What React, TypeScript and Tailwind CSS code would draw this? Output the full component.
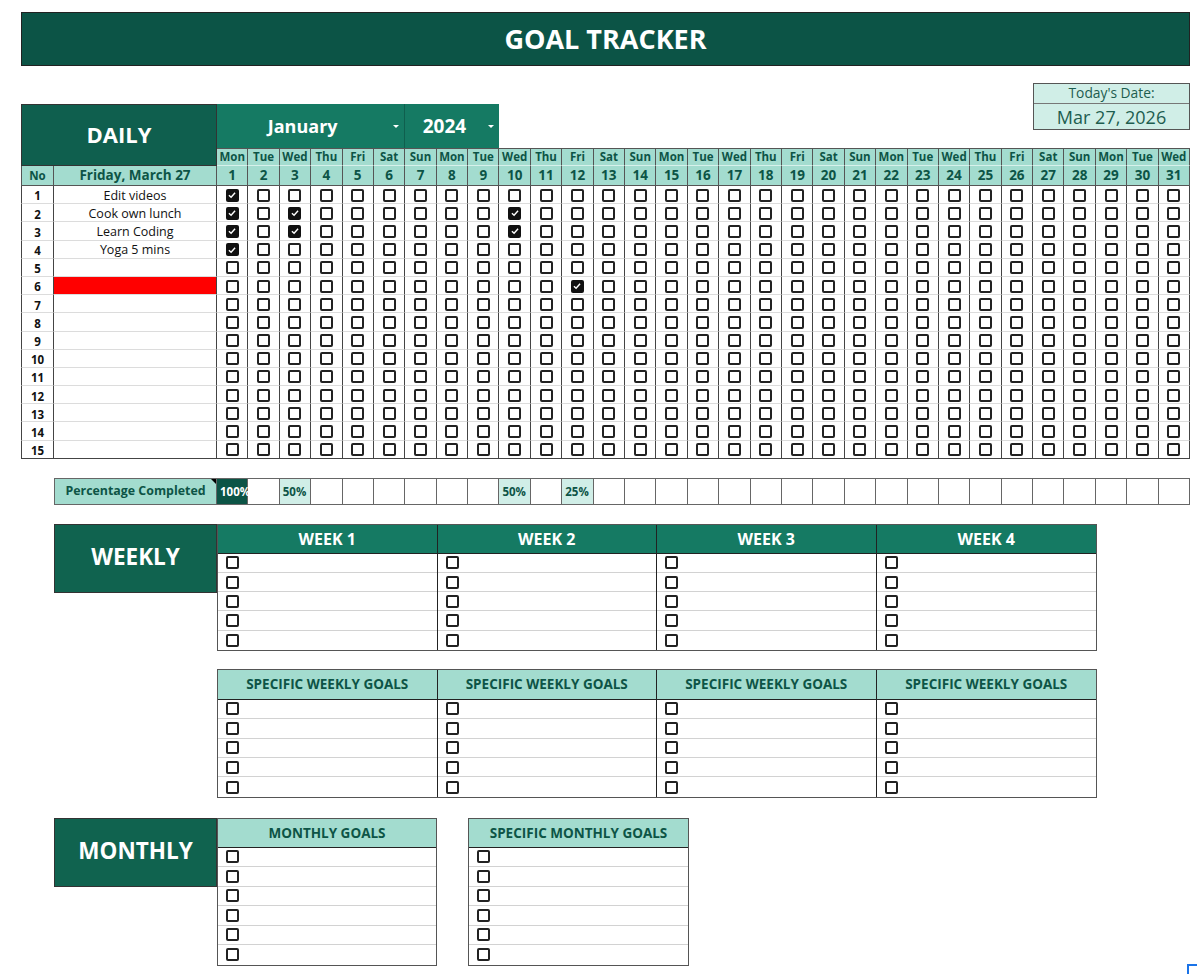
import React from "react";

const DAYS = ["Mon", "Tue", "Wed", "Thu", "Fri", "Sat", "Sun"];
const TASKS = ["Edit videos", "Cook own lunch", "Learn Coding", "Yoga 5 mins"];
// checked day numbers per task row (Jan 2024)
const CHECKED: number[][] = [[1], [1, 3, 10], [1, 3, 10], [1], [], [12]];
const days = Array.from({ length: 31 }, (_, i) => i + 1);
const rows = Array.from({ length: 15 }, (_, i) => i + 1);

function Box({ checked = false }: { checked?: boolean }) {
  if (checked) {
    return (
      <span className="flex h-[13px] w-[13px] items-center justify-center rounded-[2px] bg-[#111]">
        <svg viewBox="0 0 12 12" className="h-[10px] w-[10px]">
          <path d="M2.3 6.3 L4.9 8.7 L9.7 3.4" fill="none" stroke="white" strokeWidth="1.7" />
        </svg>
      </span>
    );
  }
  return <span className="block h-[13px] w-[13px] rounded-[2px] border-2 border-[#222]" />;
}

function Caret() {
  return <span className="h-0 w-0 border-x-[3px] border-t-[3px] border-x-transparent border-t-white" />;
}

function percentFor(day: number) {
  const done = CHECKED.filter((r) => r.includes(day)).length;
  return done === 0 ? null : Math.round((done / TASKS.length) * 100);
}

function DailyGrid() {
  return (
    <div className="mt-[17px] grid grid-cols-[33px_163px_repeat(31,minmax(0,1fr))] grid-rows-[21px_44px_18px_20px_repeat(15,18.2px)]">
      <div className="col-[1/29] row-[1/2]" />
      <div className="col-[29/34] row-[1/3] flex h-[47px] flex-col self-start border border-[#555] bg-[#d0eee7] text-[#1d5d4f]">
        <div className="flex h-[20px] items-center justify-center border-b border-[#777] text-[13.8px]">Today's Date:</div>
        <div className="flex flex-1 items-center justify-center text-[18px]">Mar 27, 2026</div>
      </div>
      <div className="col-[1/3] row-[2/4] flex items-center justify-center border border-[#333] bg-[#0f5f4e] pb-[1px] text-[22px] font-bold text-white">
        DAILY
      </div>
      <div className="col-[3/9] row-[2/3] flex items-center border-r border-[#0f5f4e] bg-[#157a63]">
        <span className="flex-1 text-center text-[18px] font-bold text-white">January</span>
        <span className="flex w-[16px] justify-center">
          <Caret />
        </span>
      </div>
      <div className="col-[9/12] row-[2/3] flex items-center bg-[#157a63]">
        <span className="flex-1 text-center text-[19px] font-bold text-white">2024</span>
        <span className="flex w-[16px] justify-center">
          <Caret />
        </span>
      </div>
      <div className="col-[12/29] row-[2/3]" />

      {days.map((d) => (
        <div
          key={`n${d}`}
          className="flex items-center justify-center border-r border-t border-b border-r-[#555] border-t-[#555] border-b-[#d7f1eb] bg-[#a3dccf] text-[11.5px] font-bold text-[#0d5446]"
        >
          {DAYS[(d - 1) % 7]}
        </div>
      ))}

      <div className="flex items-center justify-center border-x border-b border-[#555] bg-[#a3dccf] text-[11.5px] font-bold text-[#0d5446]">
        No
      </div>
      <div className="flex items-center justify-center border-r border-b border-[#555] bg-[#a3dccf] text-[13.5px] font-bold text-[#0d5446]">
        Friday, March 27
      </div>
      {days.map((d) => (
        <div
          key={`d${d}`}
          className="flex items-center justify-center border-r border-b border-[#555] bg-[#a3dccf] text-[13.5px] font-bold text-[#0d5446]"
        >
          {d}
        </div>
      ))}

      {rows.map((r) => {
        const last = r === 15;
        const checked = CHECKED[r - 1] ?? [];
        return (
          <React.Fragment key={`r${r}`}>
            <div
              className={`flex items-center justify-center border-x border-b border-x-[#444] pt-[3px] text-[11.5px] font-bold text-[#111] ${
                last ? "border-b-[#444]" : "border-b-[#dcdcdc]"
              }`}
            >
              {r}
            </div>
            <div
              className={`flex items-center justify-center border-r border-b border-r-[#444] pt-[3px] text-[12.5px] text-[#111] ${
                last ? "border-b-[#444]" : "border-b-[#dcdcdc]"
              } ${r === 6 ? "bg-[#ff0000]" : ""}`}
            >
              {TASKS[r - 1] ?? ""}
            </div>
            {days.map((d) => (
              <div
                key={`c${r}-${d}`}
                className={`flex items-center justify-center border-r border-b border-r-[#444] pt-[1px] ${
                  last ? "border-b-[#444]" : "border-b-[#dcdcdc]"
                }`}
              >
                <Box checked={checked.includes(d)} />
              </div>
            ))}
          </React.Fragment>
        );
      })}
    </div>
  );
}

function PercentRow() {
  return (
    <div className="mt-[19px] flex h-[27px]">
      <div className="w-[33px]" />
      <div className="relative flex w-[163px] items-center justify-center border border-[#666] bg-[#a3dccf] text-[12.4px] font-bold text-[#0d5446]">
        Percentage Completed
        <span className="absolute right-0 top-0 h-0 w-0 border-l-[5px] border-t-[5px] border-l-transparent border-t-black" />
      </div>
      <div className="grid flex-1 grid-cols-[repeat(31,minmax(0,1fr))]">
        {days.map((d) => {
          const p = percentFor(d);
          return (
            <div
              key={`p${d}`}
              className={`flex items-center border-y border-r border-[#666] pl-[3px] text-[11.5px] font-bold ${
                p === 100
                  ? "bg-[#0c5446] pl-[0px] text-white"
                  : p
                    ? "bg-[#d0eee7] text-[#0d5446]"
                    : "bg-white"
              }`}
            >
              {p ? `${p}%` : ""}
            </div>
          );
        })}
      </div>
    </div>
  );
}

function GoalTable({
  title,
  rowCount,
  dark,
  headerH,
  rowH,
}: {
  title: string;
  rowCount: number;
  dark: boolean;
  headerH: string;
  rowH: string;
}) {
  return (
    <div className="border-r border-[#222] last:border-r-0">
      <div
        className={`flex items-center justify-center border-b border-[#222] font-bold ${headerH} ${
          dark ? "bg-[#157a63] text-[16px] text-white" : "bg-[#a3dccf] text-[13.5px] text-[#0d5446]"
        }`}
      >
        {title}
      </div>
      {Array.from({ length: rowCount }, (_, i) => (
        <div
          key={i}
          className={`flex items-center border-b border-[#d2d2d2] pl-[8px] last:border-b-0 ${rowH}`}
        >
          <Box />
        </div>
      ))}
    </div>
  );
}

function SectionLabel({ text }: { text: string }) {
  return (
    <div className="flex h-[69px] w-[163px] shrink-0 items-center justify-center border border-[#333] bg-[#10634f] pb-[2px] text-[22.5px] font-bold text-white">
      {text}
    </div>
  );
}

export default function App() {
  return (
    <div className="relative min-h-[974px] w-[1200px] bg-white font-['Open_Sans',sans-serif]">
      <div className="ml-[21px] w-[1169px] pt-[12px]">
        <div className="flex h-[54px] items-center justify-center border border-[#222] bg-[#0c5446] text-[27px] font-bold text-white">
          GOAL TRACKER
        </div>

        <DailyGrid />
        <PercentRow />

        <div className="mt-[19px] flex">
          <div className="w-[33px]" />
          <SectionLabel text="WEEKLY" />
          <div className="grid w-[880px] grid-cols-4 self-start border border-[#555]">
            {[1, 2, 3, 4].map((w) => (
              <GoalTable key={w} title={`WEEK ${w}`} rowCount={5} dark headerH="h-[29px]" rowH="h-[19.2px]" />
            ))}
          </div>
        </div>

        <div className="mt-[18px] flex">
          <div className="w-[196px]" />
          <div className="grid w-[880px] grid-cols-4 border border-[#555]">
            {[1, 2, 3, 4].map((w) => (
              <GoalTable
                key={w}
                title="SPECIFIC WEEKLY GOALS"
                rowCount={5}
                dark={false}
                headerH="h-[30px]"
                rowH="h-[19.4px]"
              />
            ))}
          </div>
        </div>

        <div className="mt-[20px] flex">
          <div className="w-[33px]" />
          <SectionLabel text="MONTHLY" />
          <div className="w-[220px] self-start border border-[#555]">
            <GoalTable title="MONTHLY GOALS" rowCount={6} dark={false} headerH="h-[29px]" rowH="h-[19.5px]" />
          </div>
          <div className="ml-[31px] w-[221px] self-start border border-[#555]">
            <GoalTable title="SPECIFIC MONTHLY GOALS" rowCount={6} dark={false} headerH="h-[29px]" rowH="h-[19.5px]" />
          </div>
        </div>
      </div>
      <div className="absolute bottom-0 right-[3px] h-[10px] w-[10px] border-l-2 border-t-2 border-[#1a73e8]" />
    </div>
  );
}
